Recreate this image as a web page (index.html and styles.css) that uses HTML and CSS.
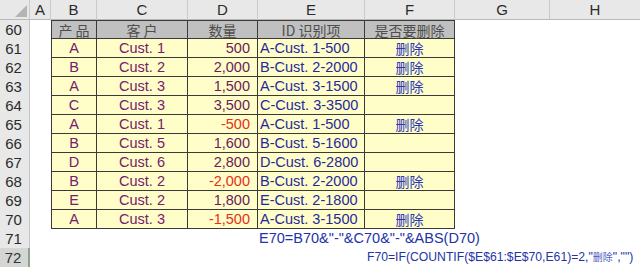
FILE: index.html
```html
<!DOCTYPE html>
<html>
<head>
<meta charset="utf-8">
<link rel="stylesheet" href="styles.css">
</head>
<body>
<div class="sheet">
  <div class="ch corner"><svg width="30" height="20" viewBox="0 0 30 20"><polygon points="27,5 27,17 15,17" fill="#b4b4b4"/></svg></div>
  <div class="ch">A</div><div class="ch">B</div><div class="ch">C</div><div class="ch">D</div><div class="ch">E</div><div class="ch">F</div><div class="ch">G</div><div class="ch last">H</div>

  <div class="rh">60</div><div class="c"></div>
  <div class="t th first top">产 品</div><div class="t th top">客 户</div><div class="t th top">数量</div><div class="t th top">ID 识别项</div><div class="t th top">是否要删除</div>
  <div class="c"></div><div class="c"></div>

  <div class="rh">61</div><div class="c"></div>
  <div class="t d first p">A</div><div class="t d p">Cust. 1</div><div class="t d n">500</div><div class="t d e">A-Cust. 1-500</div><div class="t d f">删除</div>
  <div class="c"></div><div class="c"></div>

  <div class="rh">62</div><div class="c"></div>
  <div class="t d first p">B</div><div class="t d p">Cust. 2</div><div class="t d n">2,000</div><div class="t d e">B-Cust. 2-2000</div><div class="t d f">删除</div>
  <div class="c"></div><div class="c"></div>

  <div class="rh">63</div><div class="c"></div>
  <div class="t d first p">A</div><div class="t d p">Cust. 3</div><div class="t d n">1,500</div><div class="t d e">A-Cust. 3-1500</div><div class="t d f">删除</div>
  <div class="c"></div><div class="c"></div>

  <div class="rh">64</div><div class="c"></div>
  <div class="t d first p">C</div><div class="t d p">Cust. 3</div><div class="t d n">3,500</div><div class="t d e">C-Cust. 3-3500</div><div class="t d f"></div>
  <div class="c"></div><div class="c"></div>

  <div class="rh">65</div><div class="c"></div>
  <div class="t d first p">A</div><div class="t d p">Cust. 1</div><div class="t d n neg">-500</div><div class="t d e">A-Cust. 1-500</div><div class="t d f">删除</div>
  <div class="c"></div><div class="c"></div>

  <div class="rh">66</div><div class="c"></div>
  <div class="t d first p">B</div><div class="t d p">Cust. 5</div><div class="t d n">1,600</div><div class="t d e">B-Cust. 5-1600</div><div class="t d f"></div>
  <div class="c"></div><div class="c"></div>

  <div class="rh">67</div><div class="c"></div>
  <div class="t d first p">D</div><div class="t d p">Cust. 6</div><div class="t d n">2,800</div><div class="t d e">D-Cust. 6-2800</div><div class="t d f"></div>
  <div class="c"></div><div class="c"></div>

  <div class="rh">68</div><div class="c"></div>
  <div class="t d first p">B</div><div class="t d p">Cust. 2</div><div class="t d n neg">-2,000</div><div class="t d e">B-Cust. 2-2000</div><div class="t d f">删除</div>
  <div class="c"></div><div class="c"></div>

  <div class="rh">69</div><div class="c"></div>
  <div class="t d first p">E</div><div class="t d p">Cust. 2</div><div class="t d n">1,800</div><div class="t d e">E-Cust. 2-1800</div><div class="t d f"></div>
  <div class="c"></div><div class="c"></div>

  <div class="rh">70</div><div class="c"></div>
  <div class="t d first p">A</div><div class="t d p">Cust. 3</div><div class="t d n neg">-1,500</div><div class="t d e">A-Cust. 3-1500</div><div class="t d f">删除</div>
  <div class="c"></div><div class="c"></div>

  <div class="rh">71</div><div class="c"></div><div class="c"></div><div class="c"></div><div class="c"></div>
  <div class="c formula1">E70=B70&amp;"-"&amp;C70&amp;"-"&amp;ABS(D70)</div>
  <div class="c"></div><div class="c"></div><div class="c"></div>

  <div class="rh sel">72</div><div class="c"></div><div class="c"></div><div class="c"></div><div class="c"></div><div class="c"></div>
  <div class="c formula2">F70=IF(COUNTIF($E$61:$E$70,E61)=2,"<span class="cjk">删除</span>","")</div>
  <div class="c"></div><div class="c"></div>
</div>
</body>
</html>
```

FILE: styles.css
```css
html, body {
  margin: 0;
  padding: 0;
  background: #ffffff;
}
body {
  font-family: "Liberation Sans", Arial, "Noto Sans CJK SC", sans-serif;
  font-size: 15px;
  overflow: hidden;
}
.sheet {
  display: grid;
  grid-template-columns: 30px 21px 46px 91px 70px 107px 90px 95px 90px;
  grid-template-rows: 20px repeat(13, 19px);
  width: 640px;
  height: 267px;
  overflow: hidden;
}
.sheet > div {
  box-sizing: border-box;
  white-space: nowrap;
}
.ch {
  background: #e8e8e8;
  border-right: 1px solid #cbcbcb;
  border-bottom: 1px solid #b8b8b8;
  color: #2b2b2b;
  font-size: 15px;
  line-height: 20px;
  text-align: center;
}
.ch.last { border-right: none; }
.corner { padding: 0; }
.corner svg { display: block; }
.rh {
  background: #e8e8e8;
  border-right: 1px solid #c4c4c4;
  color: #2b2b2b;
  font-size: 15px;
  line-height: 19px;
  text-align: center;
  padding-right: 2px;
}
.rh.sel {
  background: #d3d6d3;
  border-right: 2px solid #8ea08e;
  color: #333;
}
.c { background: #ffffff; }
.t {
  display: flex;
  align-items: center;
  justify-content: center;
  border-right: 1px solid #3a3a3a;
  border-bottom: 1px solid #3a3a3a;
  line-height: 16px;
  overflow: hidden;
}
.first { border-left: 1px solid #3a3a3a; }
.top { border-top: 1px solid #3a3a3a; }
.th {
  background: #c0c0c0;
  color: #4e4e4e;
  font-family: "Noto Sans CJK SC", "Liberation Sans", sans-serif;
  font-size: 14px;
}
.d {
  background: #fffdc8;
  font-size: 14.5px;
}
.p {
  color: #75206c;
}
.n {
  color: #6a1c5c;
  justify-content: flex-end;
  padding-right: 7px;
}
.neg { color: #e5301c; }
.e {
  color: #1f2a9c;
  justify-content: flex-start;
  padding-left: 2px;
}
.f {
  color: #2a36bd;
  font-family: "Noto Sans CJK SC", sans-serif;
  font-size: 14px;
}
.formula1 {
  color: #2434a8;
  font-size: 14.5px;
  line-height: 19px;
  overflow: visible;
  padding-left: 1px;
  position: relative;
  z-index: 1;
}
.formula2 {
  color: #2434a8;
  font-size: 12.2px;
  line-height: 19px;
  overflow: visible;
  padding-left: 2px;
  position: relative;
  z-index: 1;
}
.cjk {
  font-family: "Noto Sans CJK SC", sans-serif;
  font-size: 10px;
  line-height: 1;
  color: #5560c0;
}
```
